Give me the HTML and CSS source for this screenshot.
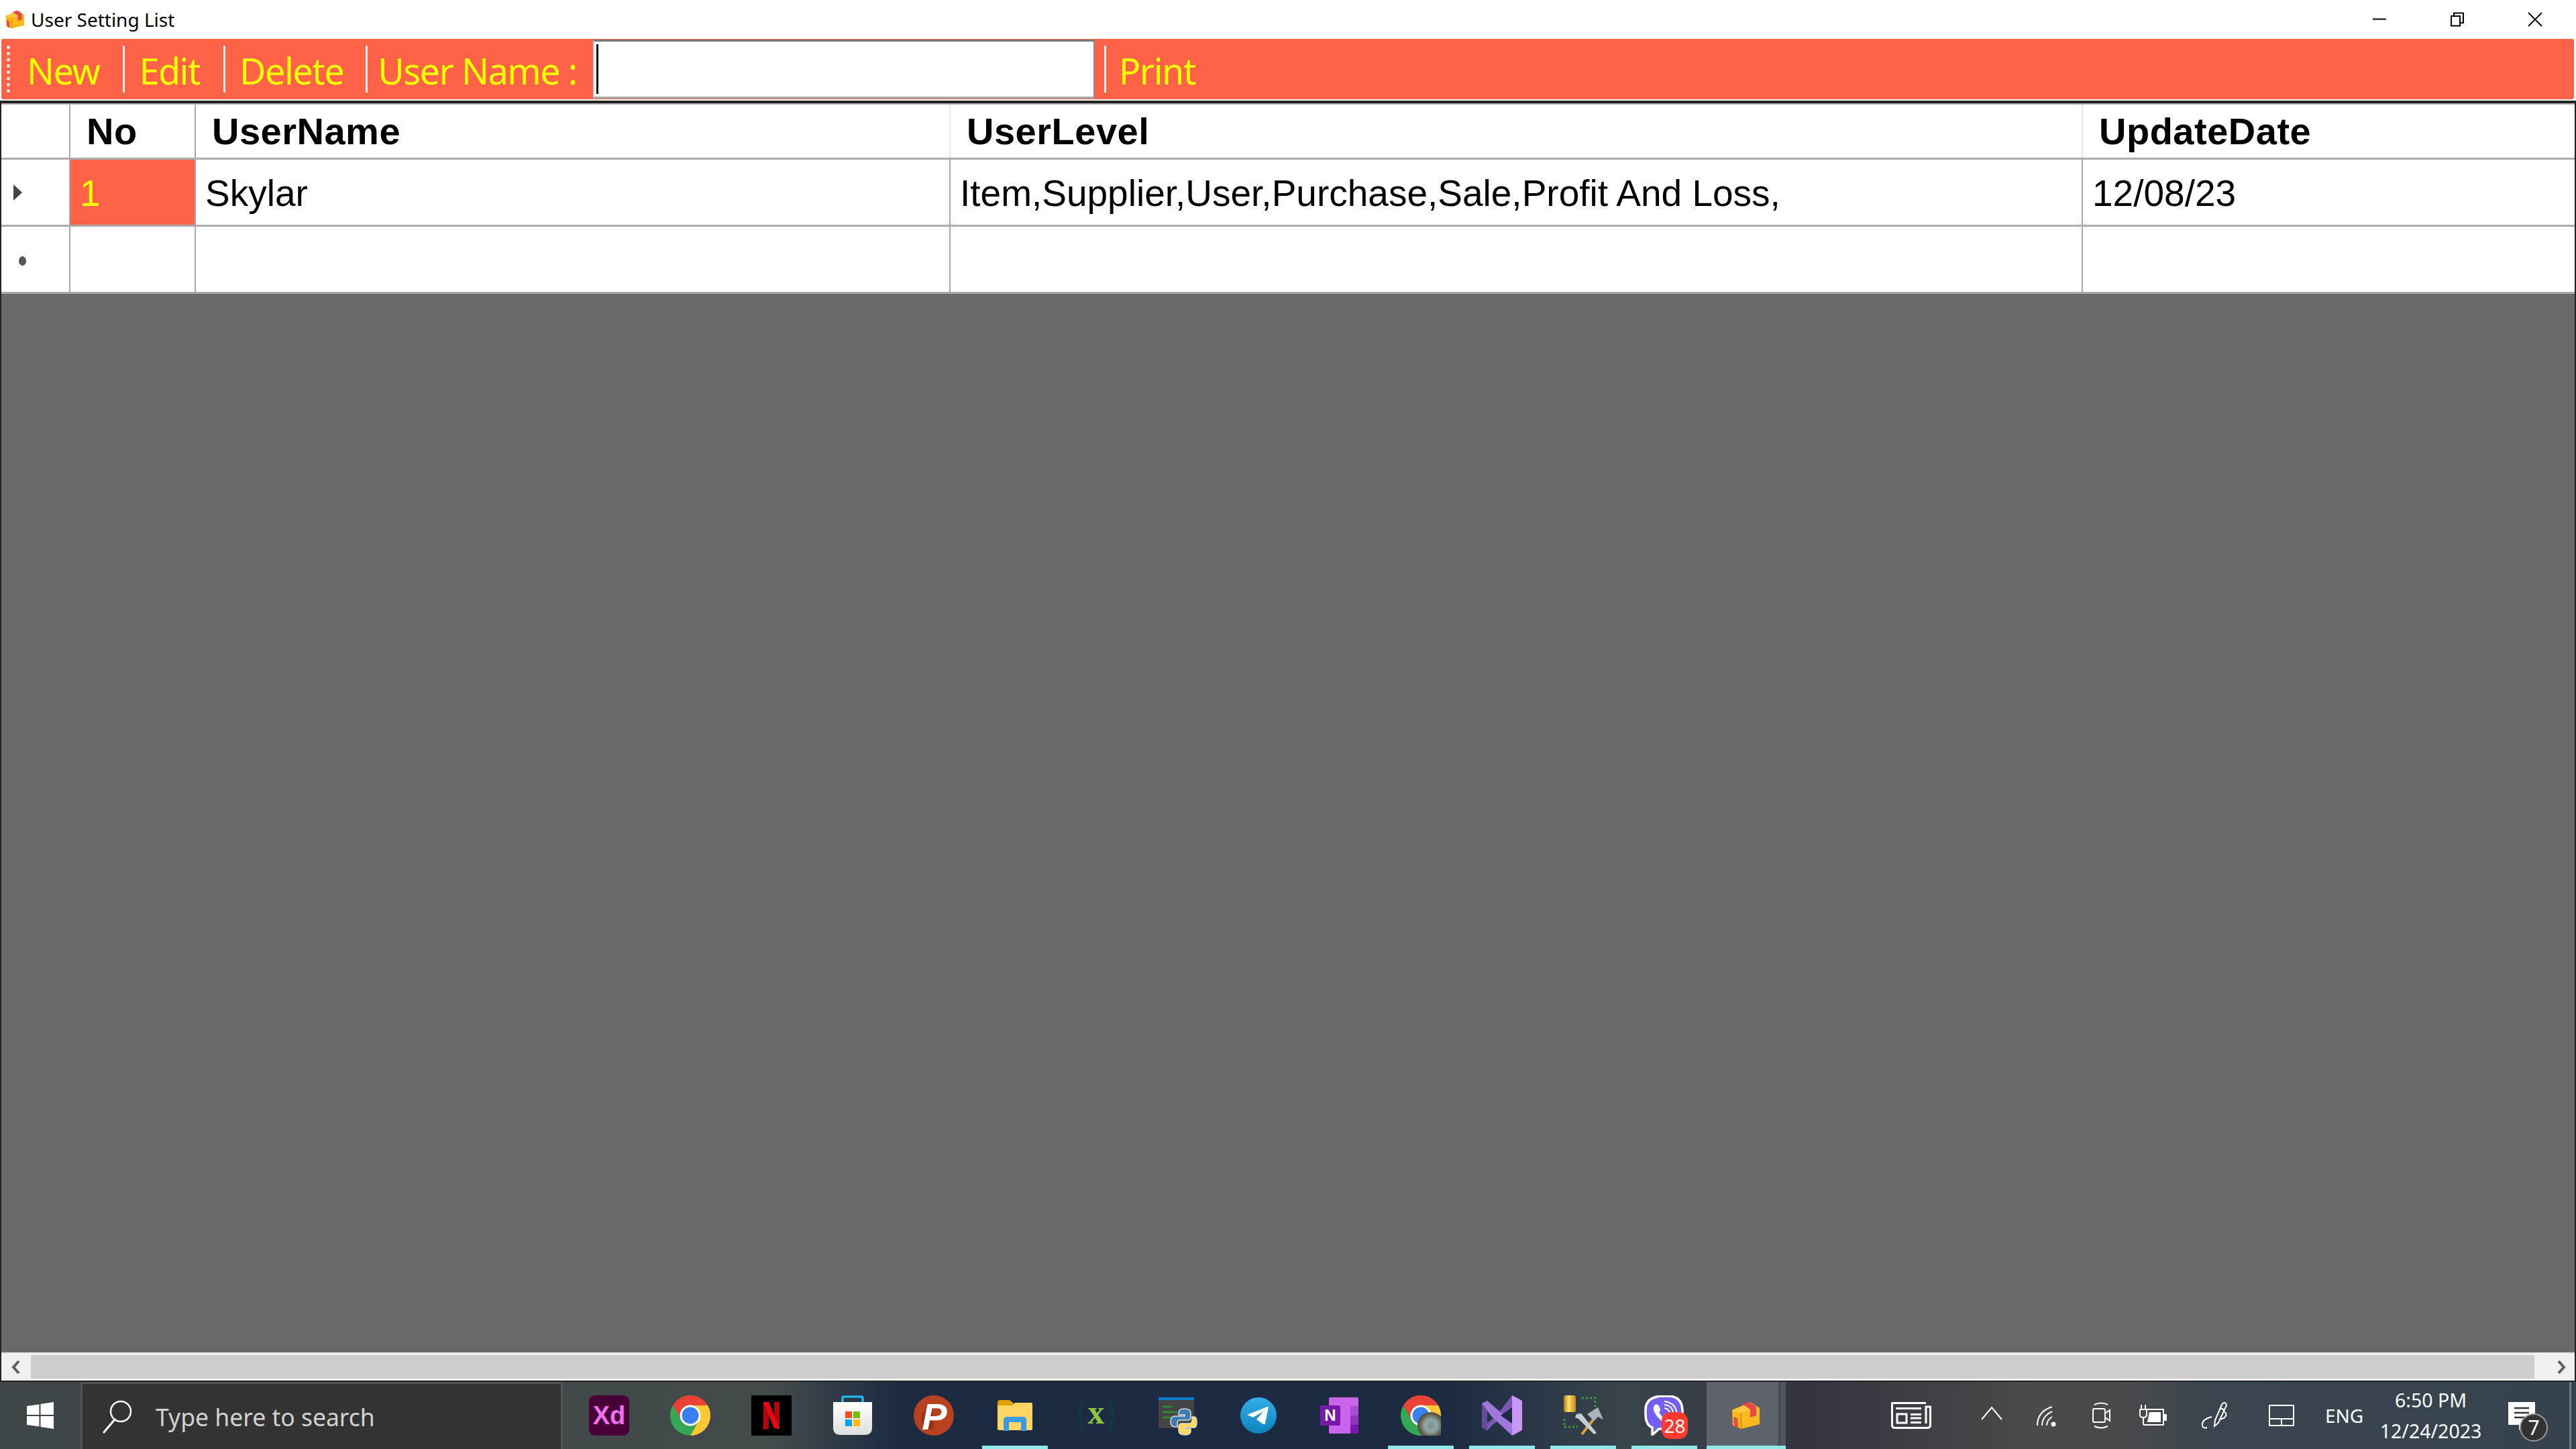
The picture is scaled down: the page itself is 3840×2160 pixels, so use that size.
FILE: index.html
```html
<!DOCTYPE html>
<html lang="en">
<head>
<meta charset="utf-8">
<title>User Setting List</title>
<link rel="stylesheet" href="styles.css">
</head>
<body>
<svg class="defs" width="0" height="0" aria-hidden="true">
  <defs>
    <symbol id="box" viewBox="0 0 42 40">
      <path d="M1 12 L28 0 L42 9 L42 33 L15 40 L2 35 Z" fill="#ffb81c"/>
      <path d="M1 12 L14 17 L42 9 L28 2 Z" fill="#ffc73d"/>
      <path d="M14 17 L15 40" stroke="#c58a10" stroke-width="1.5"/>
      <path d="M16 3 L27 0 L37 7 L37 20 L28 23 L28 11 Z" fill="#e8474c"/>
      <path d="M3 22 L9 24 L10 39 L4 36 Z" fill="#e8474c"/>
    </symbol>
    <symbol id="chrome" viewBox="0 0 60 60">
      <path d="M4 15A30 30 0 0 1 56 15H30L17 37Z" fill="#ea4335"/>
      <path d="M56 15A30 30 0 0 1 30 60L43 37L30 15Z" fill="#fcc934"/>
      <path d="M4 15A30 30 0 0 0 30 60L43 37H17Z" fill="#34a853"/>
      <circle cx="30" cy="30" r="15.5" fill="#fff"/>
      <circle cx="30" cy="30" r="12.5" fill="#3a80ee"/>
    </symbol>
  </defs>
</svg>

<div class="window">
  <header class="titlebar">
    <svg class="title-icon"><use href="#box"/></svg>
    <span class="title-text">User Setting List</span>
    <div class="win-buttons">
      <div class="win-btn"><svg width="22" height="22" viewBox="0 0 22 22"><path d="M1 10.5H21" stroke="#000" stroke-width="2"/></svg></div>
      <div class="win-btn"><svg width="22" height="22" viewBox="0 0 22 22"><path d="M2 6H15V20.5H2Z M6 6V1.500H20V16H15" fill="none" stroke="#000" stroke-width="2"/></svg></div>
      <div class="win-btn"><svg width="22" height="22" viewBox="0 0 22 22"><path d="M1 1L21 21M21 1L1 21" stroke="#000" stroke-width="1.800"/></svg></div>
    </div>
  </header>

  <nav class="toolbar">
    <span class="grip"></span>
    <span class="tool tool-first">New</span><span class="sep"></span>
    <span class="tool">Edit</span><span class="sep"></span>
    <span class="tool tool-delete">Delete</span><span class="sep"></span>
    <span class="tool tool-label">User Name :</span>
    <input class="name-input" type="text" aria-label="User Name">
    <span class="sep sep-print"></span>
    <span class="tool tool-print">Print</span>
  </nav>

  <main class="grid-frame">
    <div class="grid">
      <div class="row head">
        <div class="cell rowhead"></div>
        <div class="cell">No</div>
        <div class="cell light">UserName</div>
        <div class="cell light">UserLevel</div>
        <div class="cell last">UpdateDate</div>
      </div>
      <div class="row body">
        <div class="cell rowhead"><span class="arrow"></span></div>
        <div class="cell selected">1</div>
        <div class="cell">Skylar</div>
        <div class="cell">Item,Supplier,User,Purchase,Sale,Profit And Loss,</div>
        <div class="cell last">12/08/23</div>
      </div>
      <div class="row body">
        <div class="cell rowhead"><span class="star"></span></div>
        <div class="cell"></div>
        <div class="cell"></div>
        <div class="cell"></div>
        <div class="cell last"></div>
      </div>
    </div>
    <div class="grid-empty"></div>
    <div class="hscroll">
      <div class="sb-btn"><svg width="16" height="24" viewBox="0 0 16 24"><path d="M12 3L4 12L12 21" fill="none" stroke="#606060" stroke-width="4"/></svg></div>
      <div class="sb-track"></div>
      <div class="sb-btn sb-btn-right"><svg width="16" height="24" viewBox="0 0 16 24"><path d="M4 3L12 12L4 21" fill="none" stroke="#606060" stroke-width="4"/></svg></div>
    </div>
  </main>

  <footer class="taskbar">
    <div class="start">
      <svg width="40" height="40" viewBox="0 0 40 40"><path d="M0 6L18.500 3.400V19H0ZM20.500 3L40 0V19H20.500ZM0 21H18.500V36.600L0 34ZM20.500 21H40V40L20.500 37Z" fill="#fff"/></svg>
    </div>
    <div class="search">
      <svg class="search-icon" width="50" height="50" viewBox="0 0 50 50"><circle cx="30" cy="17" r="15" fill="none" stroke="#fff" stroke-width="2.500"/><path d="M21 29L5 48" stroke="#fff" stroke-width="3" stroke-linecap="round"/></svg>
      <span class="search-text">Type here to search</span>
    </div>
    <div class="apps">
      <div class="app">
        <svg width="60" height="60" viewBox="0 0 60 60"><rect width="60" height="60" rx="9" fill="#470137"/><text x="30" y="43" text-anchor="middle" class="xd">Xd</text></svg>
      </div>
      <div class="app"><svg width="60" height="60"><use href="#chrome"/></svg></div>
      <div class="app">
        <svg width="60" height="60" viewBox="0 0 60 60"><rect width="60" height="60" fill="#000"/><path d="M18 10H26V50L18 51Z" fill="#b1060f"/><path d="M34 10H42V50L34 49Z" fill="#b1060f"/><path d="M18 10H26L42 50L34 49Z" fill="#e50914"/></svg>
      </div>
      <div class="app">
        <svg width="60" height="60" viewBox="0 0 60 60"><defs><linearGradient id="bag" x1="0" y1="0" x2="0" y2="1"><stop offset="0" stop-color="#fff"/><stop offset="1" stop-color="#dedede"/></linearGradient></defs><path d="M15 13V4Q15 2 17 2H43Q45 2 45 4V13" fill="none" stroke="#1fb4ee" stroke-width="3.500"/><path d="M1 10H59V48Q59 59 48 59H12Q1 59 1 48Z" fill="url(#bag)"/><rect x="19" y="24" width="10" height="10" fill="#f25022"/><rect x="31" y="24" width="10" height="10" fill="#7fba00"/><rect x="19" y="36" width="10" height="10" fill="#00a4ef"/><rect x="31" y="36" width="10" height="10" fill="#ffb900"/></svg>
      </div>
      <div class="app">
        <svg width="80" height="80" viewBox="-10 -10 80 80"><circle cx="30" cy="30" r="30" fill="#b8411f"/><path d="M13 26L28 12L30 50L17 52Q8 40 13 26Z" fill="#993419"/><text x="31" y="51" text-anchor="middle" class="psi">P</text></svg>
      </div>
      <div class="app running">
        <svg width="60" height="60" viewBox="0 0 60 60"><path d="M4 11Q4 7 8 7H22L28 12V20H4Z" fill="#dfa100"/><path d="M4 15H26L30 11H54Q56 11 56 13V50Q56 52 54 52H6Q4 52 4 50Z" fill="#ffd665"/><path d="M13 53V37Q13 32 18 32H42Q47 32 47 37V53H39V40H21V53Z" fill="#3b9ae0"/></svg>
      </div>
      <div class="app">
        <svg class="soft" width="80" height="80" viewBox="0 0 80 80"><path d="M21 18Q10 40 21 62M59 18Q70 40 59 62" fill="none" stroke="#0f3a44" stroke-width="4"/><text x="40" y="52" text-anchor="middle" class="xl">x</text></svg>
      </div>
      <div class="app">
        <svg width="60" height="60" viewBox="0 0 60 60"><rect x="2" y="3" width="53" height="46" fill="#444"/><rect x="2" y="3" width="53" height="4" fill="#0a7bd0"/><path d="M8 17H22M8 25H30M8 33H22" stroke="#2f8f2f" stroke-width="2.500"/><path d="M40 20Q32 20 32 26V29H41V31H27Q20 31 20 39Q20 47 27 47H30V41Q30 37 35 37H45Q50 37 50 32V26Q50 20 40 20Z" fill="#3f7cb3" stroke="#ddd" stroke-width="1.500"/><path d="M42 59Q50 59 50 53V50H41V48H55Q59 48 59 40Q59 32 55 32H52V38Q52 42 47 42H37Q32 42 32 47V53Q32 59 42 59Z" fill="#ffd85f" stroke="#ddd" stroke-width="1.500"/></svg>
      </div>
      <div class="app">
        <svg width="60" height="60" viewBox="0 0 60 60"><defs><linearGradient id="tg" x1="0" y1="0" x2="0" y2="1"><stop offset="0" stop-color="#34aee8"/><stop offset="1" stop-color="#0c83bd"/></linearGradient></defs><circle cx="30" cy="30" r="27" fill="url(#tg)"/><path d="M13 29L43 17Q45 16 44.500 19L40 42Q39.500 44 37 43L27 36L37 24L22 33Z" fill="#fff"/></svg>
      </div>
      <div class="app">
        <svg width="60" height="60" viewBox="0 0 60 60"><rect x="14" y="3" width="44" height="54" rx="1.500" fill="#ca64ea"/><rect x="46" y="16" width="12" height="14" fill="#ae4bd5"/><rect x="46" y="30" width="12" height="14" fill="#9332bf"/><rect x="46" y="44" width="12" height="13" fill="#7719aa"/><rect x="1" y="15" width="30" height="30" rx="2" fill="#7719aa"/><text x="16" y="38" text-anchor="middle" class="one">N</text></svg>
      </div>
      <div class="app running">
        <svg width="60" height="60" viewBox="0 0 60 60"><defs><radialGradient id="photo"><stop offset="0" stop-color="#7e8f88"/><stop offset=".45" stop-color="#8fa9b0"/><stop offset=".8" stop-color="#6a6a52"/><stop offset="1" stop-color="#4c4a3a"/></radialGradient></defs><use href="#chrome" width="60" height="60"/><circle cx="45" cy="45" r="20" fill="url(#photo)"/></svg>
      </div>
      <div class="app running">
        <svg width="60" height="60" viewBox="0 0 60 60"><path d="M45 0L60 8V52L45 60Z" fill="#c898f8"/><path d="M45 0V20L14 46L8 53L0 48L22 30Z" fill="#7a56b5"/><path d="M0 12L8 8V53L0 48Z" fill="#654a9c"/><path d="M8 8L45 40V60L14 31L0 12Z" fill="#9e78da"/><path d="M45 18V42L28 30Z" fill="#1c2a42"/></svg>
      </div>
      <div class="app running">
        <svg width="60" height="60" viewBox="0 0 60 60"><defs><linearGradient id="cyl"><stop offset="0" stop-color="#b07a10"/><stop offset=".4" stop-color="#ffe070"/><stop offset="1" stop-color="#c68b14"/></linearGradient></defs><rect x="1" y="0" width="18" height="25" rx="3" fill="url(#cyl)"/><path d="M28 4H48V22M2 35V47H22" fill="none" stroke="#3f9a3f" stroke-width="3" stroke-dasharray="3 3"/><path d="M28 58L50 30" stroke="#d5a53a" stroke-width="4"/><path d="M36 28L52 18L60 36L52 32L46 38Z" fill="#aab2ba"/><path d="M20 28L27 27L50 56L46 58L23 35L18 33Z" fill="#c6ccd2"/></svg>
      </div>
      <div class="app running viber">
        <svg width="60" height="60" viewBox="0 0 60 60"><path d="M30 1H35Q57 1 57 24V30Q57 50 34 50H22L12 59V48Q2 44 2 28V22Q2 1 30 1Z" fill="#7360f2" stroke="#fff" stroke-width="3.500"/><path d="M15 15Q19 11 22 16L24 21Q24 24 22 25Q25 31 31 35Q33 33 36 34L41 38Q42 41 38 43Q34 45 27 39Q17 31 14 22Q13 18 15 15Z" fill="#fff"/><path d="M30 14Q43 15 44 30M30 9Q48 11 49 30M30 19Q38 20 39 30" fill="none" stroke="#fff" stroke-width="2"/></svg>
        <span class="badge">28</span>
      </div>
      <div class="app running active"><svg class="box-icon"><use href="#box"/></svg></div>
    </div>
    <div class="tray">
      <svg class="t-news" width="60" height="40" viewBox="0 0 60 40"><path d="M52 1.500H1.500V34Q1.500 38.500 6 38.500H54Q58.500 38.500 58.500 34V7H52V32" fill="none" stroke="#fff" stroke-width="3"/><path d="M7 9.500H45M29 18.500H45M29 24H45M29 30.500H45" stroke="#fff" stroke-width="3"/><rect x="9" y="18" width="14" height="13" fill="none" stroke="#fff" stroke-width="3"/></svg>
      <svg class="t-chev" width="32" height="40" viewBox="0 0 32 40"><path d="M1 26L16 8L31 26" fill="none" stroke="#fff" stroke-width="2"/></svg>
      <svg class="t-wifi" width="32" height="40" viewBox="0 0 32 40"><path d="M2 35Q2 14 24 7M9 35Q9 21 24 14M16 35Q16 27 24 22" fill="none" stroke="#fff" stroke-width="2"/><circle cx="26" cy="33" r="3.500" fill="#fff"/></svg>
      <svg class="t-cam" width="28" height="40" viewBox="0 0 28 40"><path d="M4 4Q14 -1 24 4M4 36Q14 41 24 36" fill="none" stroke="#fff" stroke-width="2"/><rect x="2" y="10" width="18" height="20" rx="2" fill="none" stroke="#fff" stroke-width="2"/><path d="M20 17L27 12V28L20 23" fill="none" stroke="#fff" stroke-width="2"/></svg>
      <svg class="t-batt" width="42" height="40" viewBox="0 0 42 40"><path d="M3 4V11M9 4V11M1 11H11V19Q11 23 6 23Q1 23 1 19ZM6 23V34" fill="none" stroke="#fff" stroke-width="2"/><path d="M11 11H36V34H6" fill="none" stroke="#fff" stroke-width="2"/><path d="M15 15H32V30H12Z" fill="#fff"/><rect x="37" y="18" width="4" height="10" fill="#fff"/></svg>
      <svg class="t-pen" width="42" height="40" viewBox="0 0 42 40"><path d="M22 27L32 4Q35 -1 38 2Q40 5 37 9L27 31L21 36Z" fill="none" stroke="#fff" stroke-width="2"/><path d="M30 9L36 12" stroke="#fff" stroke-width="2"/><path d="M35 14Q42 18 35 24L28 26M17 22Q2 26 3 34Q3 40 10 38" fill="none" stroke="#fff" stroke-width="2"/></svg>
      <svg class="t-touch" width="38" height="32" viewBox="0 0 38 32"><path d="M1 1H37V31H1ZM1 21H37M19 21V31" fill="none" stroke="#fff" stroke-width="2"/></svg>
      <span class="lang">ENG</span>
      <div class="clock"><span>6:50 PM</span><span>12/24/2023</span></div>
      <div class="notify">
        <svg width="60" height="60" viewBox="0 0 60 60"><path d="M0 0H40V34H24L16 42V34H0Z" fill="#fff"/><path d="M9 9H31M9 16H31M9 23H31" stroke="#333" stroke-width="2.500"/></svg>
        <span class="notify-count">7</span>
      </div>
      <span class="show-desktop"></span>
    </div>
  </footer>
</div>
</body>
</html>
```
FILE: styles.css
```css
* { box-sizing: border-box; }
html, body { margin: 0; padding: 0; background: #fff; }
body { width: 3840px; height: 2160px; overflow: hidden; font-family: "Liberation Sans", Arial, sans-serif; }
.defs { position: absolute; }

.window { width: 3840px; height: 2160px; display: flex; flex-direction: column; }

/* title bar */
.titlebar { height: 58px; flex: none; display: flex; align-items: center; padding: 0 3px 0 8px; background: #fff; }
.title-icon { width: 28px; height: 28px; flex: none; }
.title-text { margin-left: 10px; font: 28px "Noto Sans", sans-serif; color: #000; }
.win-buttons { margin-left: auto; display: flex; }
.win-btn { width: 116px; height: 58px; display: flex; align-items: center; justify-content: center; padding-bottom: 0; }

/* toolbar */
.toolbar { height: 90px; flex: none; margin: 0 3px 2px 2px; background: #ff6347; display: flex; align-items: center; border-radius: 3px; }
.grip { width: 5px; height: 70px; margin-left: 8px; border-left: 5px dotted #e5e5e5; flex: none; }
.tool { font: 54px/90px "Noto Sans", sans-serif; letter-spacing: -1.500px; color: #ff0; padding: 4px 35px 0 21px; white-space: nowrap; }
.tool-first { padding-left: 25px; }
.tool-delete { padding-right: 33px; }
.tool-label { padding-left: 15px; padding-right: 24px; }
.tool-print { padding-left: 19px; }
.sep { width: 3px; height: 70px; background: #f1f1f1; flex: none; }
.sep-print { margin-left: 14px; }
.name-input { width: 748px; height: 88px; flex: none; margin: 0; padding: 0; border: 0; border-top: 3px solid #7a7a7a; border-left: 2px solid #d0d0d0; border-right: 2px solid #8a8a8a; border-bottom: 3px solid #a8a8a8; background: #fff linear-gradient(#000, #000) 3px center / 3px 74px no-repeat; outline: 0; }

/* data grid */
.grid-frame { flex: 1; min-height: 0; display: flex; flex-direction: column; border: 2px solid #222; border-top: 4px solid #222; }
.grid { flex: none; background: #fff; }
.row { display: grid; grid-template-columns: 103px 187px 1125px 1688px 1fr; border-bottom: 3px solid #acacac; }
.row.head { height: 84px; border-top: 2px solid #b5b5b5; }
.row.body { height: 100px; }
.cell { border-right: 2px solid #a8a8a8; display: flex; align-items: center; padding: 3px 0 0 14px; font-size: 55px; color: #000; white-space: nowrap; }
.head .cell { font-weight: 700; padding: 0 0 0 24px; font-size: 56px; letter-spacing: .5px; }
.cell.light { border-right-color: #e4e4e4; }
.cell.last { border-right: 0; }
.cell.selected { background: #ff6347; color: #ff0; padding-left: 14px; }
.rowhead { padding: 0; justify-content: flex-start; }
.arrow { width: 0; height: 0; margin-left: 18px; border-left: 13px solid #444; border-top: 12px solid transparent; border-bottom: 12px solid transparent; }
.star { width: 11px; height: 14px; margin-left: 26px; margin-top: 4px; border-radius: 50%; background: #555; }
.grid-empty { flex: 1; background: #696969; }

/* scrollbar */
.hscroll { height: 42px; flex: none; display: flex; background: #f0f0f0; border-top: 2px solid #e8e8e8; }
.sb-btn { width: 44px; display: flex; align-items: center; justify-content: center; }
.sb-btn-right { width: 60px; justify-content: flex-end; padding-right: 12px; }
.sb-track { flex: 1; background: #cdcdcd; margin: 2px 0 3px; }

/* taskbar */
.taskbar { height: 100px; flex: none; display: flex; align-items: center; color: #fff; background: linear-gradient(90deg, #3f4648 0, #434a4a 30%, #1c2a42 35%, #1c2a42 56%, #39444b 63%, #33343f 70%, #4a4a4a 79%, #4b4949 82%, #3a4550 86%, #36424e 100%); }
.start { width: 120px; height: 100px; flex: none; display: flex; align-items: center; justify-content: center; }
.search { width: 719px; height: 100px; flex: none; display: flex; align-items: center; background: #333; border: 3px solid #555; border-bottom: 0; }
.search-icon { margin-left: 27px; flex: none; }
.search-text { margin-left: 32px; font: 35.500px "Noto Sans", sans-serif; color: #d2d2d2; }
.apps { display: flex; margin-left: 8px; height: 100px; flex: none; }
.app { width: 121px; height: 100px; flex: none; display: flex; align-items: center; justify-content: center; position: relative; }
.app.running { background: linear-gradient(#8fe8ea, #8fe8ea) center bottom / 98px 5px no-repeat; }
.app.active { background: linear-gradient(#8fe8ea, #8fe8ea) 3px bottom / 118px 5px no-repeat, linear-gradient(90deg, transparent 3px, #5e626b 3px, #5e626b 110px, #474850 110px, #474850 113px, #54565e 113px, #54565e 121px, transparent 121px); }
.box-icon { width: 42px; height: 40px; }
.soft { filter: blur(0.6px); }
.xd { font: 700 38px "Liberation Sans", sans-serif; fill: #ee6fee; }
.psi { font: italic 700 56px "Liberation Sans", sans-serif; fill: #fff; }
.xl { font: 700 50px "Liberation Serif", serif; fill: #8cc63f; }
.one { font: 700 24px "Liberation Sans", sans-serif; fill: #fff; }
.badge { position: absolute; left: 57px; top: 45px; width: 39px; height: 40px; border-radius: 13px; background: #ff3b30; color: #fff; font: 28px/40px "Noto Sans", sans-serif; text-align: center; }

.tray { display: flex; align-items: center; height: 100px; flex: 1; }
.tray svg { flex: none; }
.t-news { margin-left: 157px; }
.t-chev { margin-left: 74px; }
.t-wifi { margin-left: 50px; }
.t-cam { margin-left: 51px; }
.t-batt { margin-left: 43px; }
.t-pen { margin-left: 49px; }
.t-touch { margin-left: 60px; }
.lang { margin-left: 46px; width: 58px; font: 28px "Noto Sans", sans-serif; color: #fff; }
.clock { margin-left: 22px; width: 155px; display: flex; flex-direction: column; align-items: center; gap: 14px; font: 28.500px/32px "Noto Sans", sans-serif; color: #fff; }
.notify { margin-left: 38px; width: 60px; height: 60px; margin-top: 20px; position: relative; }
.notify-count { position: absolute; left: 17px; top: 17px; width: 42px; height: 42px; border-radius: 50%; background: #333; border: 2px solid #999; font: 30px/38px "Noto Sans", sans-serif; text-align: center; color: #fff; }
.show-desktop { margin-left: 31px; width: 3px; height: 100px; background: #6f7d88; flex: none; }
```
